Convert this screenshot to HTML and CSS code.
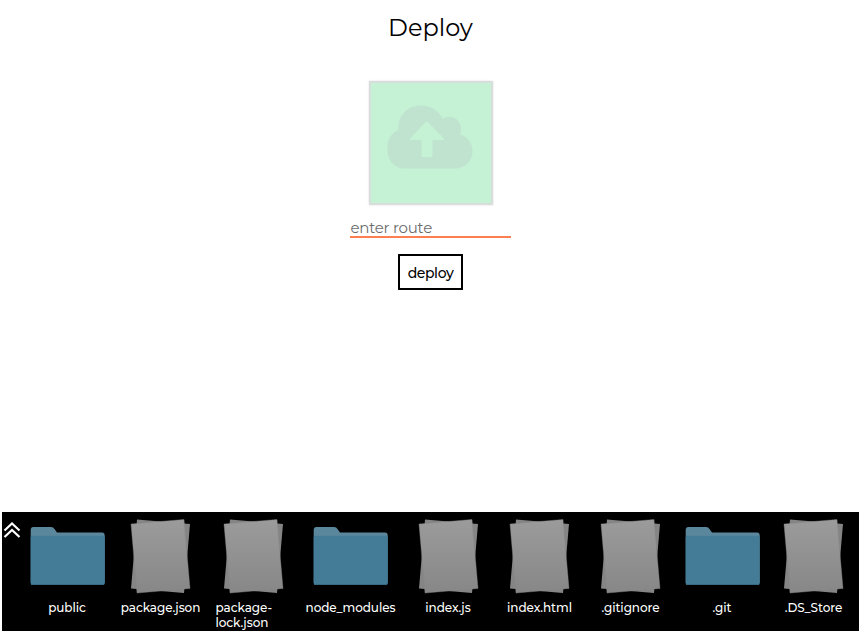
FILE: index.html
```html
<!DOCTYPE html>
<html lang="en">
<head>
<meta charset="utf-8">
<title>Deploy</title>
<link rel="stylesheet" href="styles.css">
</head>
<body>
<svg class="defs" aria-hidden="true">
  <defs>
    <linearGradient id="paper" x1="0" y1="0" x2="0" y2="1"><stop offset="0" stop-color="#9b9b9b"/><stop offset="1" stop-color="#878787"/></linearGradient>
    <symbol id="folder" viewBox="0 0 75 75">
      <path d="M.7 10.500Q.7 8 3 8H21Q23.500 8 24.500 10L27 13.500H72Q74.700 13.500 74.700 16.500V63.500Q74.700 66 72.500 66H2.500Q.7 66 .7 63.500Z" fill="#5b879c"/>
      <path d="M.7 18.500Q.7 16.800 2.500 16.800H72.500Q74.700 16.800 74.700 18.500V63.500Q74.700 66 72.500 66H2.500Q.7 66 .7 63.500Z" fill="#447c97"/>
      <path d="M1.700 65.500H73.700" stroke="#386b83" fill="none"/>
    </symbol>
    <symbol id="files" viewBox="0 0 75 75">
      <path d="M14 .5L67 5 61 74 8 69.500Z" fill="#858585"/>
      <path d="M8 5L61 .5 67 69.500 14 74Z" fill="url(#paper)" stroke="#858585" stroke-width=".4"/>
    </symbol>
  </defs>
</svg>
<main class="deploy">
  <h1 class="title">Deploy</h1>
  <div class="dropzone">
    <svg class="cloud" viewBox="0 0 86 64"><path fill-rule="evenodd" d="M18 63.500C8 63.500 .5 56 .5 45.500V42C.5 34 5 27.500 11.500 25C10.500 11 20 .5 34 .5C44 .5 52 6 55.500 14C64 8 74.500 15 74 24Q74 27 73 29.500C80 31.500 85.500 38 85.500 46C85.500 56 78 63.500 68 63.500ZM40.500 16.800Q39.800 16.300 39 16.800L23.300 33Q22 35 24 35H34.500V51Q34.500 52 35.500 52H44.500Q45.500 52 45.500 51V35H56Q58 35 56.500 33Z" fill="#c0e3cf"/></svg>
  </div>
  <input class="route" type="text" placeholder="enter route">
  <button class="submit" type="button">deploy</button>
</main>
<footer class="tray">
  <svg class="expand" viewBox="0 0 18 17"><path d="M1.500 8.500L9 1.500 16.500 8.500M1.500 15L9 8 16.500 15" fill="none" stroke="#fff" stroke-width="2.200"/></svg>
  <div class="items">
    <div class="item"><svg class="icon"><use href="#folder"/></svg><span class="label">public</span></div>
    <div class="item"><svg class="icon"><use href="#files"/></svg><span class="label">package.json</span></div>
    <div class="item"><svg class="icon"><use href="#files"/></svg><span class="label lock">package-<br>lock.json</span></div>
    <div class="item"><svg class="icon"><use href="#folder"/></svg><span class="label">node_modules</span></div>
    <div class="item"><svg class="icon"><use href="#files"/></svg><span class="label">index.js</span></div>
    <div class="item"><svg class="icon"><use href="#files"/></svg><span class="label">index.html</span></div>
    <div class="item"><svg class="icon"><use href="#files"/></svg><span class="label">.gitignore</span></div>
    <div class="item"><svg class="icon"><use href="#folder"/></svg><span class="label">.git</span></div>
    <div class="item"><svg class="icon"><use href="#files"/></svg><span class="label">.DS_Store</span></div>
  </div>
</footer>
</body>
</html>
```
FILE: styles.css
```css
* { box-sizing: border-box; }
body {
  margin: 0;
  height: 631px;
  display: flex;
  flex-direction: column;
  overflow: hidden;
  background: #fff;
  color: #000;
  font-family: Montserrat, Inter, sans-serif;
}
.defs { position: absolute; width: 0; height: 0; }
.deploy {
  height: 512px;
  width: 861px;
  display: flex;
  flex-direction: column;
  align-items: center;
}
.title { margin: 13px 0 0; font-size: 24px; line-height: 29px; font-weight: 400; }
.dropzone {
  width: 124px;
  height: 124px;
  margin-top: 39px;
  padding: 21.5px 0 0 16px;
  border: 2px solid #d8dedb;
  background: #c5f1d5;
  box-shadow: 0 0 2px #ddd;
}
.cloud { display: block; width: 86px; height: 64px; }
.route {
  width: 161px;
  height: 20px;
  margin-top: 13px;
  padding: 0;
  border: 0;
  border-bottom: 2px solid coral;
  outline: 0;
  background: none;
  font: 15px/18px Montserrat, Inter, sans-serif;
  letter-spacing: -.25px;
  text-indent: .5px;
}
.route::placeholder { color: #6c6c6c; opacity: 1; }
.submit {
  width: 65px;
  height: 36px;
  margin-top: 16px;
  padding: 1px 0 0;
  border: 2px solid #000;
  background: #fff;
  color: #000;
  font: 500 14px Montserrat, Inter, sans-serif;
  letter-spacing: -.4px;
}
.tray {
  display: flex;
  width: 857px;
  height: 119px;
  margin-left: 2px;
  background: #000;
  color: #fff;
}
.expand { width: 18px; height: 17px; margin: 10px 0 0 1px; flex: none; }
.items {
  display: grid;
  grid-template-columns: 92px 95px 91px 103px 92px 91px 91px 92px 91px;
  padding-top: 7px;
}
.item { display: flex; flex-direction: column; align-items: center; }
.icon { width: 75px; height: 75px; flex: none; }
.label { margin-top: 6px; font-size: 12px; line-height: 15px; font-weight: 500; letter-spacing: -.05px; white-space: nowrap; }
.lock { width: 76px; }
```
